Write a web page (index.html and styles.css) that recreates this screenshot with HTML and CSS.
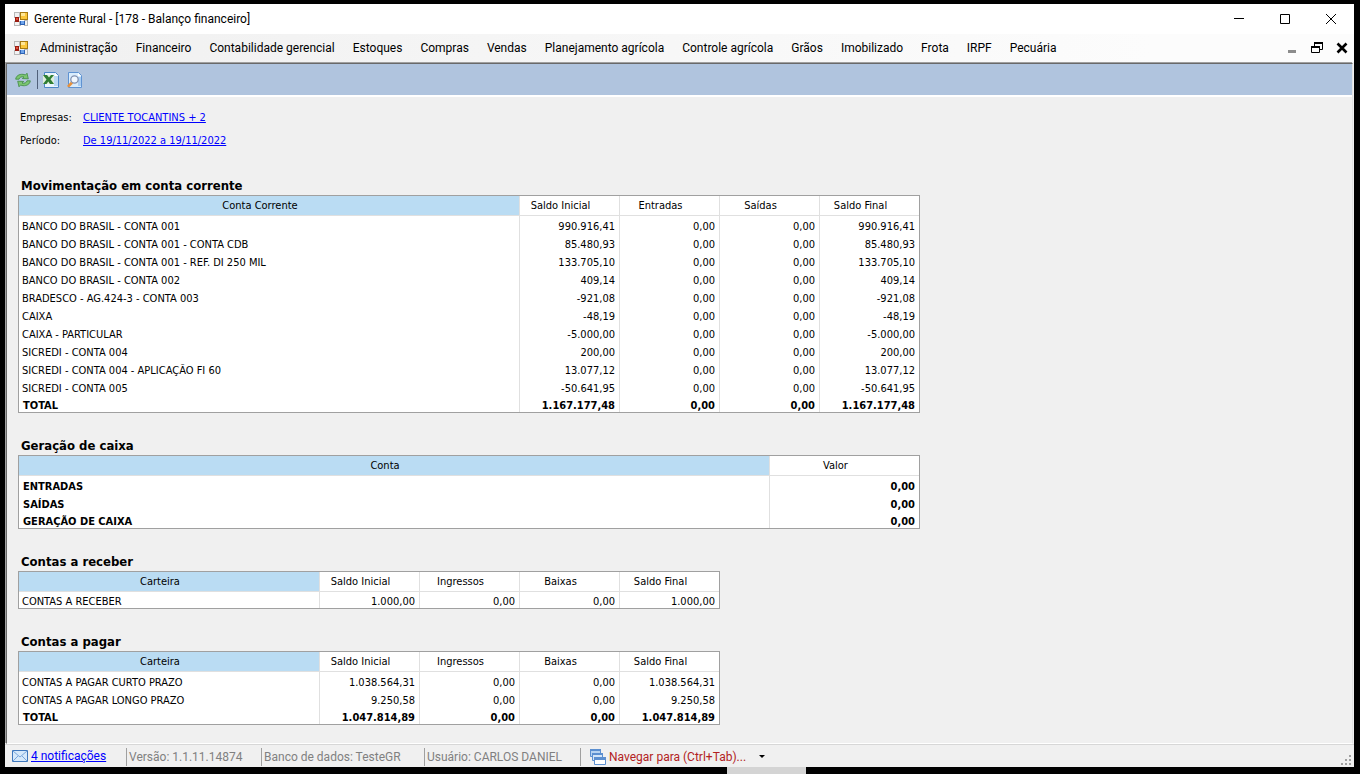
FILE: index.html
```html
<!DOCTYPE html>
<html lang="pt-BR">
<head>
<meta charset="utf-8">
<title>Gerente Rural - [178 - Balanço financeiro]</title>
<link rel="stylesheet" href="styles.css">
</head>
<body>
<svg class="defs" aria-hidden="true">
  <symbol id="app" viewBox="0 0 14 14">
    <path fill="#b8b8b8" d="M0 0h6v6H0zM0 9h7v5H0zM10 8h4v6h-4z"/>
    <path fill="#f2f2f2" d="M1 1h4v4H1zM1 10h4v3H1zM11 9h2v4h-2z"/>
    <path fill="#9b1c10" d="M1 5h4v5H1z"/><path fill="#e0523c" d="M2 6h2v2H2z"/>
    <path fill="#a87a10" d="M6 0h8v8H6z"/><path fill="#fbc63a" d="M7 1h6v6H7z"/><path fill="#ffe696" d="M7 1h4v3H7z"/>
    <path fill="#2c62b5" d="M6 9h5v4H6z"/><path fill="#6fa4ea" d="M7 9h3v3H7z"/>
  </symbol>
</svg>
<div class="window">
  <header class="titlebar">
    <svg class="app-icon"><use href="#app"/></svg>
    <h1 class="title">Gerente Rural - [178 - Balanço financeiro]</h1>
    <button class="caption" aria-label="Minimizar"><svg viewBox="0 0 10 10"><path stroke="#000" d="M0 4.500h10"/></svg></button>
    <button class="caption" aria-label="Maximizar"><svg viewBox="0 0 10 10"><path fill="none" stroke="#000" d="M.5.5h9v9h-9z"/></svg></button>
    <button class="caption" aria-label="Fechar"><svg viewBox="0 0 10 10"><path stroke="#000" d="M0 0l10 10M10 0L0 10"/></svg></button>
  </header>
  <nav class="menubar">
    <svg class="app-icon"><use href="#app"/></svg>
    <button>Administração</button><button>Financeiro</button><button>Contabilidade gerencial</button><button>Estoques</button><button>Compras</button><button>Vendas</button><button>Planejamento agrícola</button><button>Controle agrícola</button><button>Grãos</button><button>Imobilizado</button><button>Frota</button><button>IRPF</button><button>Pecuária</button>
    <div class="mdi-buttons">
      <button aria-label="Minimizar janela"><svg viewBox="0 0 12 12"><path fill="#8c8c8c" d="M2 8h8v3H2z"/></svg></button>
      <button aria-label="Restaurar janela"><svg viewBox="0 0 12 12"><path fill="none" stroke="#000" d="M3.500 4V1.500h8v6H9"/><path fill="#000" d="M3 0h9v2H3zM0 4h9v2H0z"/><path fill="none" stroke="#000" d="M.5 5.500h8v5h-8z"/></svg></button>
      <button aria-label="Fechar janela"><svg viewBox="0 0 12 12"><path stroke="#000" stroke-width="2.600" d="M1.500 1.500l9 9M10.500 1.500l-9 9"/></svg></button>
    </div>
  </nav>
  <main class="client">
    <div class="toolbar">
      <button aria-label="Atualizar"><svg viewBox="0 0 16 16"><path fill="#7cc571" stroke="#3f8a42" stroke-width=".8" d="M.7 7.200C1 4 4 2 8 2.300l2.500.6L12 1.200l1.300 5.600-6-.3L9 4.900C6.500 4.400 4.500 5.200 4 7.200zM15.300 8.800c-.3 3.200-3.300 5.200-7.300 4.900l-2.500-.6L4 14.800 2.700 9.200l6 .3L7 11.100c2.500.5 4.500-.3 5-2.300z"/></svg></button>
      <span class="tool-sep"></span>
      <button aria-label="Exportar para Excel"><svg viewBox="0 0 16 16"><path fill="#eaf4fe" stroke="#4c86c6" d="M1.500.5h11l3 3v12h-14z"/><path fill="#b9d8f4" d="M11 4h4v10h-4z"/><path fill="#fff" d="M12 1v3h3z"/><path fill="#dfeedd" d="M0 3h11v9H0z"/><path fill="#2f7d33" d="M0 3h4l2 2.500L8 3h3L7.500 7.200 11 12H7L5.300 9.500 3.500 12H0l3.500-4.500z"/></svg></button>
      <button aria-label="Visualizar impressão"><svg viewBox="0 0 16 16"><path fill="#d9ecfc" stroke="#5f93d2" d="M1.500.5h10l3 3v12h-13z"/><path fill="#a9cdf2" d="M11 5h3v9h-3z"/><path fill="#fff" d="M11 1v3h3z"/><path fill="#e8913a" d="M4 9.500l2 2-4 4-2-1.500z"/><circle cx="7.500" cy="7.500" r="3.700" fill="#f1f8ff" stroke="#8090b0" stroke-width="1.300"/></svg></button>
    </div>
    <div class="report">
      <dl class="filters">
        <dt>Empresas:</dt><dd><a href="#">CLIENTE TOCANTINS + 2</a></dd>
        <dt>Período:</dt><dd><a href="#">De 19/11/2022 a 19/11/2022</a></dd>
      </dl>
      <section>
        <h2>Movimentação em conta corrente</h2>
        <table class="grid wide">
          <thead><tr><th>Conta Corrente</th><th class="num">Saldo Inicial</th><th class="num">Entradas</th><th class="num">Saídas</th><th class="num">Saldo Final</th></tr></thead>
          <tbody>
            <tr><td>BANCO DO BRASIL - CONTA 001</td><td>990.916,41</td><td>0,00</td><td>0,00</td><td>990.916,41</td></tr>
            <tr><td>BANCO DO BRASIL - CONTA 001 - CONTA CDB</td><td>85.480,93</td><td>0,00</td><td>0,00</td><td>85.480,93</td></tr>
            <tr><td>BANCO DO BRASIL - CONTA 001 - REF. DI 250 MIL</td><td>133.705,10</td><td>0,00</td><td>0,00</td><td>133.705,10</td></tr>
            <tr><td>BANCO DO BRASIL - CONTA 002</td><td>409,14</td><td>0,00</td><td>0,00</td><td>409,14</td></tr>
            <tr><td>BRADESCO - AG.424-3 - CONTA 003</td><td>-921,08</td><td>0,00</td><td>0,00</td><td>-921,08</td></tr>
            <tr><td>CAIXA</td><td>-48,19</td><td>0,00</td><td>0,00</td><td>-48,19</td></tr>
            <tr><td>CAIXA - PARTICULAR</td><td>-5.000,00</td><td>0,00</td><td>0,00</td><td>-5.000,00</td></tr>
            <tr><td>SICREDI - CONTA 004</td><td>200,00</td><td>0,00</td><td>0,00</td><td>200,00</td></tr>
            <tr><td>SICREDI - CONTA 004 - APLICAÇÃO FI 60</td><td>13.077,12</td><td>0,00</td><td>0,00</td><td>13.077,12</td></tr>
            <tr><td>SICREDI - CONTA 005</td><td>-50.641,95</td><td>0,00</td><td>0,00</td><td>-50.641,95</td></tr>
            <tr class="total"><td>TOTAL</td><td>1.167.177,48</td><td>0,00</td><td>0,00</td><td>1.167.177,48</td></tr>
          </tbody>
        </table>
      </section>
      <section>
        <h2>Geração de caixa</h2>
        <table class="grid wide">
          <thead><tr><th>Conta</th><th class="value">Valor</th></tr></thead>
          <tbody>
            <tr class="total"><td>ENTRADAS</td><td>0,00</td></tr>
            <tr class="total"><td>SAÍDAS</td><td>0,00</td></tr>
            <tr class="total"><td>GERAÇÃO DE CAIXA</td><td>0,00</td></tr>
          </tbody>
        </table>
      </section>
      <section>
        <h2>Contas a receber</h2>
        <table class="grid">
          <thead><tr><th>Carteira</th><th class="num">Saldo Inicial</th><th class="num">Ingressos</th><th class="num">Baixas</th><th class="num">Saldo Final</th></tr></thead>
          <tbody>
            <tr><td>CONTAS A RECEBER</td><td>1.000,00</td><td>0,00</td><td>0,00</td><td>1.000,00</td></tr>
          </tbody>
        </table>
      </section>
      <section>
        <h2>Contas a pagar</h2>
        <table class="grid">
          <thead><tr><th>Carteira</th><th class="num">Saldo Inicial</th><th class="num">Ingressos</th><th class="num">Baixas</th><th class="num">Saldo Final</th></tr></thead>
          <tbody>
            <tr><td>CONTAS A PAGAR CURTO PRAZO</td><td>1.038.564,31</td><td>0,00</td><td>0,00</td><td>1.038.564,31</td></tr>
            <tr><td>CONTAS A PAGAR LONGO PRAZO</td><td>9.250,58</td><td>0,00</td><td>0,00</td><td>9.250,58</td></tr>
            <tr class="total"><td>TOTAL</td><td>1.047.814,89</td><td>0,00</td><td>0,00</td><td>1.047.814,89</td></tr>
          </tbody>
        </table>
      </section>
    </div>
  </main>
  <footer class="statusbar">
    <div class="cell notices">
      <svg viewBox="0 0 16 12"><path fill="#d6e9fb" stroke="#3f78bd" d="M.5.5h15v11H.5z"/><path fill="none" stroke="#7aa7dc" d="M1 1l7 6 7-6M1 11l5-5M15 11l-5-5"/></svg>
      <a href="#">4 notificações</a>
    </div>
    <div class="cell version">Versão: 1.1.11.14874</div>
    <div class="cell database">Banco de dados: TesteGR</div>
    <div class="cell user">Usuário: CARLOS DANIEL</div>
    <button class="cell navigate">
      <svg viewBox="0 0 16 16"><g stroke="#5b8fd0"><path fill="#b7d3f1" d="M.5.500h10v7H.5z"/><path fill="#d3e5f8" d="M2.500 4.500h10v7h-10z"/><path fill="#fff" d="M4.500 8.500h11v7h-11z"/></g><path fill="#5b8fd0" d="M0 0h11v2H0zM2 4h11v2H2zM4 8h12v3H4z"/></svg>
      Navegar para (Ctrl+Tab)...
      <span class="caret"></span>
    </button>
    <svg class="grip" viewBox="0 0 11 11"><path fill="#a0a0a0" d="M8 0h2v2H8zM4 4h2v2H4zM8 4h2v2H8zM0 8h2v2H0zM4 8h2v2H4zM8 8h2v2H8z"/></svg>
  </footer>
</div>
<div class="desktop"><span class="peek"></span></div>
</body>
</html>
```
FILE: styles.css
```css
* { box-sizing: border-box; }
body {
  margin: 0;
  min-height: 100vh;
  padding: 4px 6px 0 5px;
  display: flex;
  flex-direction: column;
  background: #000;
  color: #000;
  font: 12px/16px Roboto, "Open Sans", sans-serif;
}
button { border: 0; padding: 0; background: none; font: inherit; color: inherit; }
h1, h2, dl, dd { margin: 0; }
a { color: #00f; }
.defs { position: absolute; width: 0; height: 0; }
.window { flex: 1; display: flex; flex-direction: column; background: #f0f0f0; }
.titlebar { display: flex; align-items: center; height: 30px; padding-left: 9px; background: #fff; }
.app-icon { width: 14px; height: 14px; flex: none; }
.title { flex: 1; margin-left: 6px; font-size: 12px; font-weight: 400; }
.caption { width: 46px; height: 30px; display: flex; align-items: center; justify-content: center; }
.caption svg { width: 10px; height: 10px; }
.menubar { display: flex; align-items: center; height: 28px; padding: 0 6px 0 9px; background: linear-gradient(90deg, #f0f0f0, #fcfcfc 85%); }
.menubar > button { margin-left: 18px; white-space: nowrap; }
.menubar > .app-icon + button { margin-left: 12px; }
.mdi-buttons { display: flex; gap: 13px; margin-left: auto; }
.mdi-buttons svg { display: block; width: 12px; height: 12px; }
.client {
  flex: 1;
  margin: 1px 1px 0 1px;
  border: 1px solid;
  border-color: #696969 #e3e3e3 #fff #696969;
  box-shadow: -1px -1px 0 #a0a0a0;
}
.toolbar { display: flex; align-items: center; height: 33px; padding-left: 8px; border-bottom: 2px solid #fff; background: #b0c4de; }
.toolbar button { margin-right: 8px; }
.toolbar svg { display: block; width: 16px; height: 16px; }
.tool-sep { width: 1px; height: 19px; margin: 0 5px 0 -2px; background: #50607a; }
.report { padding: 12px 11px 12px; font: 11px/18px "DejaVu Sans Condensed", "DejaVu Sans", sans-serif; }
.filters { display: grid; grid-template-columns: 63px 1fr; row-gap: 5px; padding: 0 2px 25px; }
section { margin-bottom: 22px; }
section:last-child { margin-bottom: 0; }
h2 { margin-left: 3px; padding-top: 2px; font-size: 13px; line-height: 18px; }
.grid { width: 702px; border: 1px solid #a0a0a0; border-spacing: 0; table-layout: fixed; background: #fff; }
.grid.wide { width: 902px; }
.grid th { height: 20px; padding: 1px 18px 0 0; font-weight: 400; background: #badcf3; border-bottom: 1px solid #e0e0e0; }
.grid .num { width: 100px; background: #fff; }
.grid .value { width: 150px; background: #fff; }
.grid td { padding: 0 4px; text-align: right; white-space: nowrap; }
.grid td:first-child { padding-left: 3px; text-align: left; }
.grid .total td:first-child { padding-left: 4px; }
.grid td + td, .grid th + th { border-left: 1px solid #e0e0e0; }
.grid tbody tr:first-child td { padding-top: 2px; }
.grid tbody tr:last-child td { padding-top: 2px; line-height: 12px; }
.grid tbody tr:only-child td { padding-top: 4px; }
.total td { font-weight: 700; }
.statusbar { display: flex; align-items: center; height: 23px; padding: 1px 2px 0 7px; border-top: 1px solid #d7d7d7; color: #808080; }
.cell { display: flex; align-items: center; height: 18px; padding-left: 2px; border-left: 1px solid #a0a0a0; white-space: nowrap; }
.notices { width: 114px; padding: 0 0 2px; border: 0; gap: 3px; }
.notices svg { width: 16px; height: 12px; }
.version { width: 135px; }
.database { width: 163px; }
.user { width: 156px; }
.navigate { padding-left: 9px; gap: 3px; color: #b22222; }
.navigate svg { width: 16px; height: 16px; }
.caret { margin-left: 10px; border: 3px solid transparent; border-top-color: #000; border-bottom: 0; }
.grip { width: 11px; height: 11px; margin: 8px 0 0 auto; }
.desktop { height: 7px; display: flex; }
.peek { width: 79px; margin-left: 722px; background: #d4d4d4; }
```
